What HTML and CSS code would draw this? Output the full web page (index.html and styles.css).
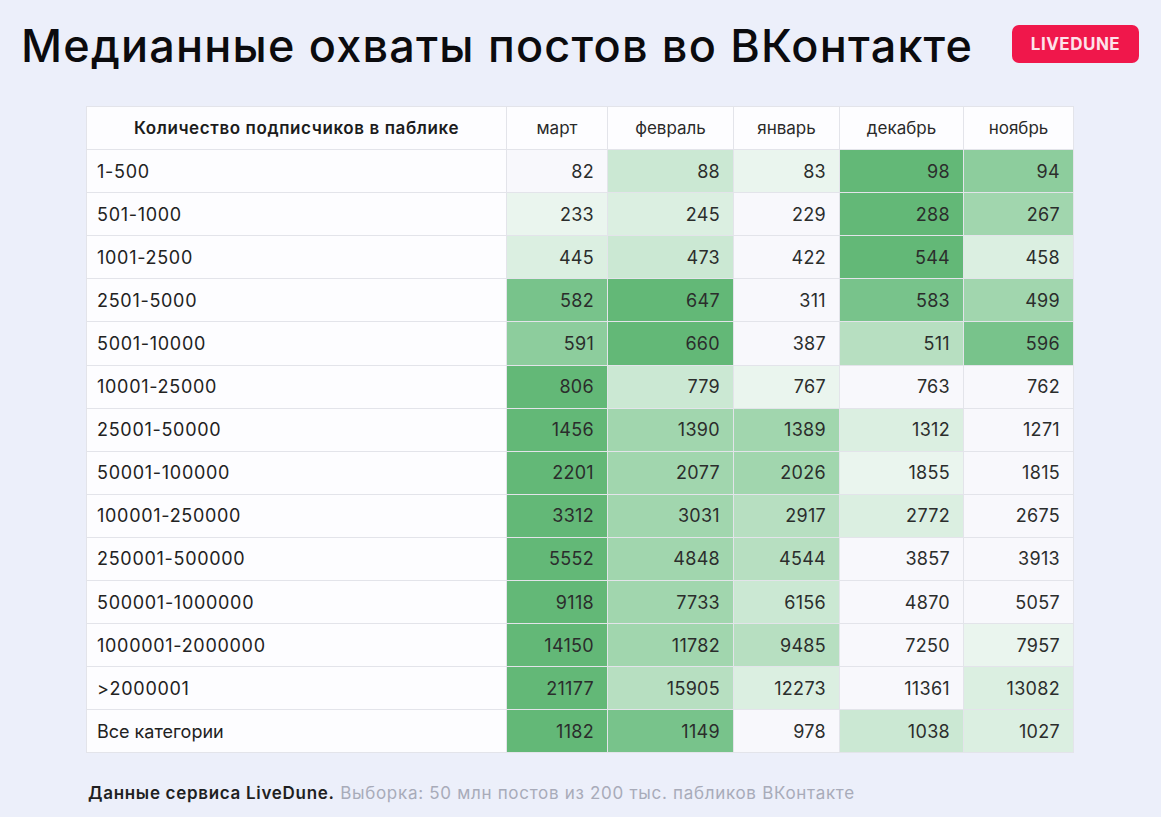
FILE: index.html
```html
<!DOCTYPE html>
<html lang="ru">
<head>
<meta charset="utf-8">
<title>Медианные охваты постов во ВКонтакте</title>
<link rel="stylesheet" href="styles.css">
</head>
<body>
<div class="page">
  <header class="top">
    <h1 class="title">Медианные охваты постов во ВКонтакте</h1>
    <div class="logo">LIVEDUNE</div>
  </header>
  <main class="content">
    <table class="heat">
      <colgroup>
        <col class="c-label"><col class="c-mar"><col class="c-feb"><col class="c-jan"><col class="c-dec"><col class="c-nov">
      </colgroup>
      <thead>
        <tr><th class="th-label">Количество подписчиков в паблике</th><th>март</th><th>февраль</th><th>январь</th><th>декабрь</th><th>ноябрь</th></tr>
      </thead>
      <tbody>
        <tr><td class="lbl">1-500</td><td class="h0">82</td><td class="h3">88</td><td class="h1">83</td><td class="h8">98</td><td class="h6">94</td></tr>
        <tr><td class="lbl">501-1000</td><td class="h1">233</td><td class="h2">245</td><td class="h0">229</td><td class="h8">288</td><td class="h5">267</td></tr>
        <tr><td class="lbl">1001-2500</td><td class="h2">445</td><td class="h3">473</td><td class="h0">422</td><td class="h8">544</td><td class="h2">458</td></tr>
        <tr><td class="lbl">2501-5000</td><td class="h7">582</td><td class="h8">647</td><td class="h0">311</td><td class="h7">583</td><td class="h5">499</td></tr>
        <tr><td class="lbl">5001-10000</td><td class="h6">591</td><td class="h8">660</td><td class="h0">387</td><td class="h4">511</td><td class="h7">596</td></tr>
        <tr><td class="lbl">10001-25000</td><td class="h8">806</td><td class="h3">779</td><td class="h1">767</td><td class="h0">763</td><td class="h0">762</td></tr>
        <tr><td class="lbl">25001-50000</td><td class="h8">1456</td><td class="h5">1390</td><td class="h5">1389</td><td class="h2">1312</td><td class="h0">1271</td></tr>
        <tr><td class="lbl">50001-100000</td><td class="h8">2201</td><td class="h5">2077</td><td class="h5">2026</td><td class="h1">1855</td><td class="h0">1815</td></tr>
        <tr><td class="lbl">100001-250000</td><td class="h8">3312</td><td class="h5">3031</td><td class="h4">2917</td><td class="h2">2772</td><td class="h0">2675</td></tr>
        <tr><td class="lbl">250001-500000</td><td class="h8">5552</td><td class="h5">4848</td><td class="h4">4544</td><td class="h0">3857</td><td class="h0">3913</td></tr>
        <tr><td class="lbl">500001-1000000</td><td class="h8">9118</td><td class="h5">7733</td><td class="h3">6156</td><td class="h0">4870</td><td class="h0">5057</td></tr>
        <tr><td class="lbl">1000001-2000000</td><td class="h8">14150</td><td class="h5">11782</td><td class="h4">9485</td><td class="h0">7250</td><td class="h1">7957</td></tr>
        <tr><td class="lbl">&gt;2000001</td><td class="h8">21177</td><td class="h4">15905</td><td class="h2">12273</td><td class="h0">11361</td><td class="h2">13082</td></tr>
        <tr><td class="lbl lbl-text">Все категории</td><td class="h8">1182</td><td class="h7">1149</td><td class="h0">978</td><td class="h3">1038</td><td class="h2">1027</td></tr>
      </tbody>
    </table>
  </main>
  <footer class="note"><span class="note-strong">Данные сервиса LiveDune.</span> <span class="note-muted">Выборка: 50 млн постов из 200 тыс. пабликов ВКонтакте</span></footer>
</div>
</body>
</html>
```

FILE: styles.css
```css
html, body {
  margin: 0;
  padding: 0;
}
body {
  background: #eceffa;
  font-family: Inter, "Open Sans", sans-serif;
  color: #222;
  width: 1161px;
  height: 817px;
  overflow: hidden;
}
.page {
  display: flex;
  flex-direction: column;
}
.top {
  display: flex;
  justify-content: space-between;
  align-items: center;
  padding: 22px 22px 0 21px;
  height: 47px;
}
.title {
  margin: 0;
  font-family: Inter, "Open Sans", sans-serif;
  font-weight: 500;
  font-size: 45px;
  letter-spacing: 1.2px;
  color: #0b0b0e;
  line-height: 50px;
}
.logo {
  width: 127px;
  height: 38px;
  border-radius: 7px;
  background: #f0174b;
  color: #fde3ea;
  font-family: Inter, "Open Sans", sans-serif;
  font-weight: 700;
  font-size: 17px;
  letter-spacing: 0.5px;
  display: flex;
  align-items: center;
  justify-content: center;
  margin-top: -3px;
}
.content {
  padding: 37px 0 0 86px;
}
.heat {
  border-collapse: collapse;
  table-layout: fixed;
  width: 987px;
  background: #fdfdff;
  border: 1px solid #c3cae3;
}
.c-label { width: 420px; }
.c-mar { width: 101px; }
.c-feb { width: 126px; }
.c-jan { width: 106px; }
.c-dec { width: 124px; }
.c-nov { width: 110px; }
.heat th, .heat td {
  height: 42.1px;
  border: 1px solid #e3e4ea;
  padding: 0;
}
.heat th {
  font-weight: 400;
  text-align: center;
  color: #2a2a2a;
  background: #fdfdff;
  font-size: 17px;
}
.heat th.th-label {
  font-weight: 600;
  color: #1c1c1c;
  letter-spacing: 0.6px;
}
.heat td {
  text-align: right;
  padding-right: 13px;
  color: #2b2d2c;
  font-size: 18px;
  letter-spacing: 0.3px;
}
.heat td.lbl {
  text-align: left;
  padding-left: 10px;
  padding-right: 0;
  font-size: 18px;
  letter-spacing: 0.7px;
  color: #222;
  background: #fdfdff;
}
.heat td.lbl-text {
  letter-spacing: 0;
}
.h0 { background: #f8f8fc; }
.h1 { background: #eaf5ee; }
.h2 { background: #dbefe1; }
.h3 { background: #cbe8d3; }
.h4 { background: #b7dfc1; }
.h5 { background: #a1d6ae; }
.h6 { background: #8dcd9d; }
.h7 { background: #78c38b; }
.h8 { background: #63b877; }
.note {
  padding: 30px 0 0 88px;
  font-size: 17px;
  letter-spacing: 0.7px;
}
.note-strong {
  color: #1f1f22;
  font-weight: 600;
}
.note-muted {
  color: #a8abb9;
}
```
